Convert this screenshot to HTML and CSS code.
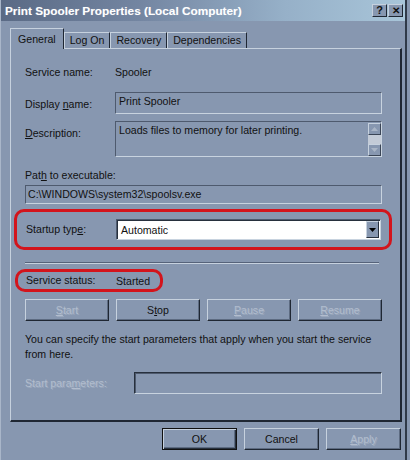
FILE: index.html
```html
<!DOCTYPE html>
<html>
<head>
<meta charset="utf-8">
<link rel="stylesheet" href="styles.css">
</head>
<body>
<div class="window">
  <div class="titlebar">
    <span class="title">Print Spooler Properties (Local Computer)</span>
    <div class="tbtns"><span class="tbtn">?</span><span class="tbtn x">&#x2715;</span></div>
  </div>
  <div class="content">
    <div class="tabs">
      <div class="tab active">General</div>
      <div class="tab">Log On</div>
      <div class="tab">Recovery</div>
      <div class="tab">Dependencies</div>
    </div>
    <div class="panel">
      <div class="row name-row"><span class="label">Service name:</span><span>Spooler</span></div>
      <div class="row top-row display-row"><span class="label">Display <u>n</u>ame:</span><div class="field ro display">Print Spooler</div></div>
      <div class="row top-row desc-row"><span class="label"><u>D</u>escription:</span>
        <div class="field ro desc"><span class="desc-text">Loads files to memory for later printing.</span>
          <div class="scroll">
            <span class="sbtn"><svg width="7" height="4" viewBox="0 0 7 4"><path d="M3.5 0 L7 4 L0 4 Z" fill="#a9b5c6"/></svg></span>
            <span class="strack"></span>
            <span class="sbtn"><svg width="7" height="4" viewBox="0 0 7 4"><path d="M0 0 L7 0 L3.5 4 Z" fill="#a9b5c6"/></svg></span>
          </div>
        </div>
      </div>
      <div class="path-label">Pat<u>h</u> to executable:</div>
      <div class="field ro path">C:\WINDOWS\system32\spoolsv.exe</div>
      <div class="highlight startup"><span class="label">Startup typ<u>e</u>:</span>
        <div class="select"><span>Automatic</span><span class="drop"><svg width="7" height="4" viewBox="0 0 7 4"><path d="M0 0 L7 0 L3.5 4 Z" fill="#000"/></svg></span></div>
      </div>
      <div class="sep"></div>
      <div class="highlight status"><span class="label">Service status:</span><span>Started</span></div>
      <div class="btnrow">
        <span class="btn disabled"><u>S</u>tart</span>
        <span class="btn">S<u>t</u>op</span>
        <span class="btn disabled"><u>P</u>ause</span>
        <span class="btn disabled"><u>R</u>esume</span>
      </div>
      <p class="note">You can specify the start parameters that apply when you start the service from here.</p>
      <div class="row params"><span class="label plabel disabled">Start para<u>m</u>eters:</span><div class="field pfield"></div></div>
    </div>
    <div class="footer">
      <span class="btn fbtn default">OK</span>
      <span class="btn fbtn">Cancel</span>
      <span class="btn fbtn disabled"><u>A</u>pply</span>
    </div>
  </div>
</div>
</body>
</html>
```

FILE: styles.css
```css
* { box-sizing: border-box; }
body {
  margin: 0;
  background: #8797b0;
  font: 10.6px "Liberation Sans", Arial, sans-serif;
  color: #111;
}
u { text-decoration: underline; text-underline-offset: 1px; }
.window {
  width: 407px;
  height: 460px;
  border-right: 2px solid #2f3948;
  border-left: 1px solid #a9b6c9;
}
.titlebar {
  height: 21px;
  display: flex;
  align-items: center;
  padding: 0 2px 0 4px;
  background: linear-gradient(to right, #5a6a85 0%, #7486a2 35%, #96b0c8 70%, #a8c5d9 100%);
  color: #fff;
  font-weight: bold;
  font-size: 11.8px;
}
.title { text-shadow: 0 0 1px rgba(255,255,255,0.3); }
.tbtns { margin-left: auto; display: flex; gap: 1px; }
.tbtn {
  width: 15px;
  height: 13px;
  background: #8797b0;
  border: 1px solid;
  border-color: #c6d1de #1f2733 #1f2733 #c6d1de;
  color: #111;
  font-size: 11px;
  font-weight: bold;
  display: flex;
  align-items: center;
  justify-content: center;
  line-height: 1;
}
.tbtn.x { font-size: 10px; }
.content { padding: 7px 0 0 9px; }
.tabs { display: flex; align-items: flex-end; height: 20px; }
.tab {
  height: 16px;
  padding: 0 5px;
  border: 1px solid;
  border-bottom: none;
  border-color: #c6d1de #1f2733 transparent #c6d1de;
  line-height: 14px;
}
.tab.active {
  height: 21px;
  margin-bottom: -1px;
  padding: 0 7px;
  line-height: 20px;
  background: #8797b0;
  position: relative;
  z-index: 1;
}
.panel {
  width: 392px;
  height: 374px;
  border: 1px solid;
  border-color: #c6d1de #1f2733 #1f2733 #c6d1de;
  border-right-width: 2px;
  border-bottom-width: 2px;
  padding: 17px 0 0 14px;
}
.row { display: flex; align-items: center; }
.top-row { align-items: flex-start; }
.label { width: 90px; flex: none; line-height: 13px; }
.top-row .label { margin-top: 6px; }
.name-row { height: 13px; line-height: 13px; }
.field {
  border: 1px solid;
  border-color: #4e5a6e #c8d3df #c8d3df #4e5a6e;
  padding: 1px 3px;
  line-height: 14px;
}
.display-row { margin-top: 13px; }
.display { width: 267px; height: 22px; }
.desc-row { margin-top: 7px; }
.desc { width: 267px; height: 36px; display: flex; padding: 1px 0 0 3px; }
.desc-text { flex: 1; }
.scroll { width: 13px; display: flex; flex-direction: column; }
.sbtn {
  height: 12px;
  background: #8797b0;
  border: 1px solid;
  border-color: #c6d1de #3a4556 #3a4556 #c6d1de;
  display: flex;
  align-items: center;
  justify-content: center;
}
.strack { flex: 1; background: #c3cbd7; }
.path-label { margin-top: 12px; line-height: 13px; }
.path { margin-top: 3px; width: 357px; height: 19px; padding: 1px 2px; line-height: 15px; }
.highlight {
  border: 3px solid #d3141c;
  border-radius: 10px;
  display: flex;
  align-items: center;
}
.startup {
  margin-top: 5px;
  margin-left: -11px;
  width: 378px;
  height: 41px;
  padding: 0 8px 0 9px;
}
.select {
  flex: 1;
  height: 21px;
  background: #fff;
  border: 1px solid;
  border-color: #4e5a6e #c8d3df #c8d3df #4e5a6e;
  box-shadow: inset 1px 1px 0 #27303d;
  display: flex;
  align-items: center;
  padding: 0 1px 0 4px;
}
.select span:first-child { flex: 1; }
.drop {
  width: 13px;
  height: 17px;
  background: #8797b0;
  border: 1px solid;
  border-color: #c6d1de #27303d #27303d #c6d1de;
  display: flex;
  align-items: center;
  justify-content: center;
}
.sep {
  margin-top: 12px;
  width: 354px;
  border-top: 1px solid #56637a;
  border-bottom: 1px solid #c6d1de;
}
.status {
  margin-top: 5px;
  margin-left: -10px;
  width: 148px;
  height: 23px;
  padding-left: 8px;
}
.btnrow { margin-top: 7px; display: flex; gap: 7px; }
.btn {
  width: 84px;
  height: 22px;
  display: flex;
  align-items: center;
  justify-content: center;
  background: #8797b0;
  border: 1px solid;
  border-color: #c6d1de #1f2733 #1f2733 #c6d1de;
  box-shadow: inset -1px -1px 0 #5d6b81;
}
.disabled { color: #b2bdce; text-shadow: 1px 1px 0 #9aa8bd; }
.note { margin: 11px 0 0; width: 358px; line-height: 15px; }
.params { margin-top: 10px; }
.plabel { width: 109px; }
.pfield {
  width: 248px;
  height: 22px;
  border-color: #27303d #c8d3df #c8d3df #27303d;
  box-shadow: inset 1px 1px 0 #4e5a6e;
}
.footer {
  width: 392px;
  display: flex;
  justify-content: flex-end;
  gap: 7px;
  margin-top: 6px;
  padding-right: 1px;
}
.fbtn { width: 75px; }
.default { border: 1px solid #111; box-shadow: inset 1px 1px 0 #c6d1de, inset -1px -1px 0 #27303d, inset -2px -2px 0 #5d6b81; }
```
